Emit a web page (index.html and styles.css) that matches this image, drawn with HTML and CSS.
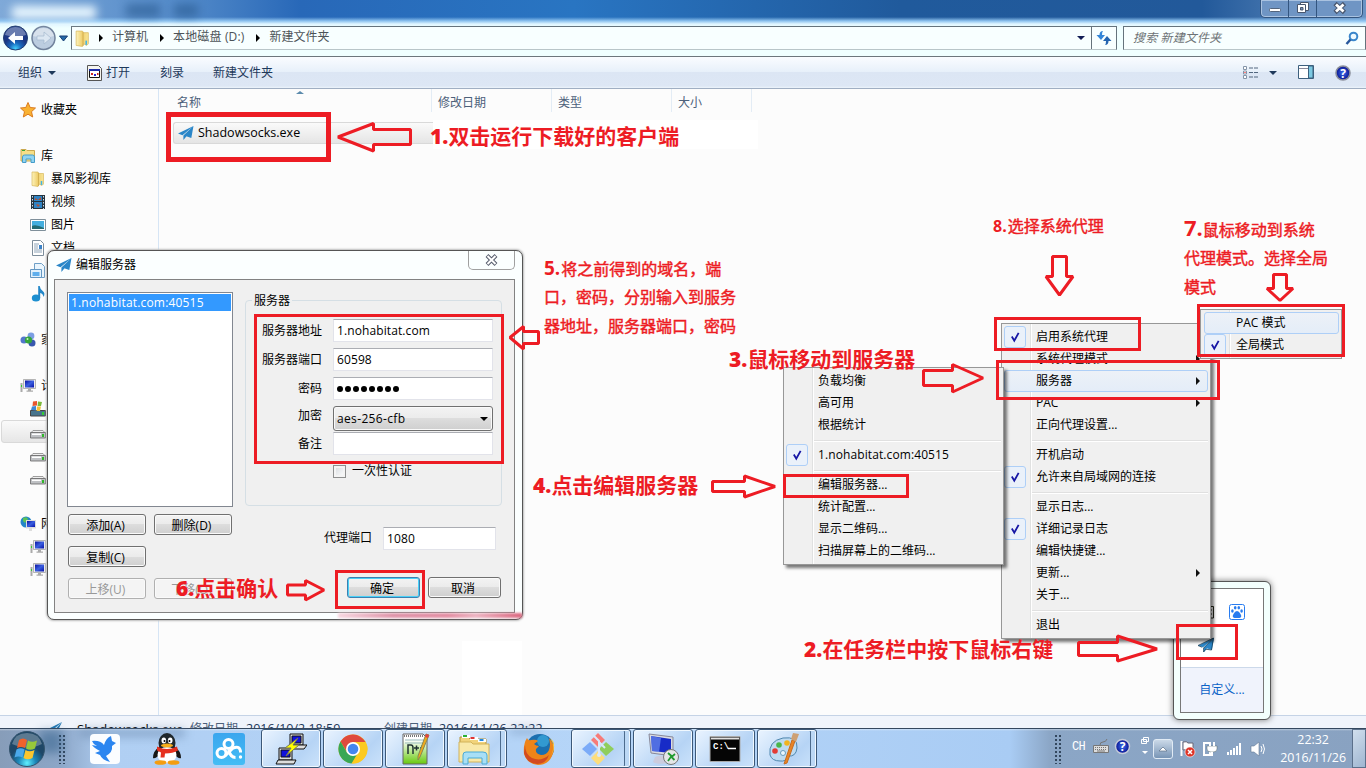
FILE: index.html
```html
<!DOCTYPE html>
<html lang="zh-CN">
<head>
<meta charset="utf-8">
<title>新建文件夹</title>
<link rel="stylesheet" href="styles.css">
</head>
<body>
<svg class="defs" aria-hidden="true">
<defs>
<linearGradient id="gold" x1="0" x2="1"><stop offset="0" stop-color="#fdf3bb"/><stop offset=".5" stop-color="#efcf6e"/><stop offset="1" stop-color="#f8e596"/></linearGradient>
<linearGradient id="scr" x1="0" x2="1" y2="1"><stop offset="0" stop-color="#0a12a0"/><stop offset=".5" stop-color="#3a5fe0"/><stop offset="1" stop-color="#0812a8"/></linearGradient>
<linearGradient id="grn" y2="1" x2="0"><stop offset=".2" stop-color="#fff"/><stop offset="1" stop-color="#67c90d"/></linearGradient>
<radialGradient id="orb" cy=".9"><stop offset="0" stop-color="#5ff0ff"/><stop offset=".5" stop-color="#1c86b8"/><stop offset="1" stop-color="#1e4767"/></radialGradient>
<radialGradient id="back" cy=".95"><stop offset="0" stop-color="#44d2ff"/><stop offset=".5" stop-color="#1968bd"/><stop offset="1" stop-color="#1a3784"/></radialGradient>
<linearGradient id="sky" x2="0" y2="1"><stop offset="0" stop-color="#3aa6ee"/><stop offset="1" stop-color="#43bdf5"/></linearGradient>
<radialGradient id="help"><stop offset="0" stop-color="#3f6ff0"/><stop offset="1" stop-color="#07128e"/></radialGradient>
<symbol id="plane" viewBox="0 0 16 16"><path fill="#2a86c8" d="M15.500 1 0 8.500l4.500 1.800zM15.500 1 5.400 10.600v4.400l2.300-2.800zM15.500 1 7.500 11l5.800 2z"/></symbol>
<symbol id="folder" viewBox="0 0 16 16"><path fill="url(#gold)" stroke="#d9b95f" stroke-width=".7" d="M2 1h6l1 1.500h4.500V13l-1.500 1.500L9 13l-1 2.500-6-1z"/><path d="M8.500 2v13" stroke="#cda748" stroke-width=".8"/><path d="M11.500 10v4" stroke="#43b4e5" stroke-width="1.500"/></symbol>
<symbol id="lib" viewBox="0 0 16 16"><path fill="#f6df88" stroke="#caa950" d="M1 1.500h5l1 1h7.500V13H1z"/><path d="M2 2.500h3" stroke="#3aa53a"/><path fill="#8fd3f2" stroke="#459dca" d="M2.500 14.500V9q0-2 2-2h8q2 0 2 2v5.500h-3.500v-3.500H6v3.500z"/></symbol>
<symbol id="pc" viewBox="0 0 16 16"><path fill="#eee" stroke="#999" stroke-width=".7" d="M3.500 1.500h12v9h-12z"/><path fill="url(#scr)" d="M5 2.500h9v7H5z"/><path fill="#aaa" d="M8 11h3v1.500h2v1.300H6.500v-1.300H8zM.5 5h2v9h-2z"/><path d="M1 7h1v2H1z" fill="#3c3"/></symbol>
<symbol id="disk" viewBox="0 0 16 16"><path fill="#eee" stroke="#888" stroke-width=".8" d="M3 6.500h10l2 2.300H1z"/><path fill="#bfc1c4" stroke="#666" stroke-width=".8" d="M.5 8.500h15V14H.5z"/><path fill="#fff" d="M2 9.500h9v1.500H2z"/><path fill="#30b82a" d="M12 10h2v3h-2z"/></symbol>
<symbol id="check" viewBox="0 0 22 22"><path d="m7.500 10.500 2.700 4.500L15 6.500" fill="none" stroke="#1717a5" stroke-width="2"/></symbol>
</defs>
</svg>

<main class="explorer">
  <header class="titlebar">
    <div class="caption">
      <i class="smudge s1"></i><i class="smudge s2"></i><i class="smudge s3"></i>
      <div class="winbtns">
        <span><svg width="14" height="16"><rect x="1.500" y="8.500" width="11" height="3" rx="1" fill="#fff" stroke="#53647c"/></svg></span>
        <span><svg width="14" height="16"><path d="M4.500 2.500h8v8h-8z" fill="#fff" stroke="#48566e"/><path d="M1.500 4.500h8v8h-8z" fill="#fff" stroke="#48566e"/><path d="M4.500 7.500h2.500v2.500H4.500z" fill="#7991b4" stroke="#48566e"/></svg></span>
        <span class="x"><svg width="14" height="16"><path d="m2 3.500 9.500 9M11.500 3.500l-9.500 9" stroke="#48566e" stroke-width="4.600"/><path d="m3 4.500 7.500 7M10.500 4.500l-7.500 7" stroke="#fff" stroke-width="2.800"/></svg></span>
      </div>
    </div>
    <div class="addressrow">
      <svg class="navbtns" width="71" height="28" viewBox="0 0 71 28">
        <circle cx="15.500" cy="14" r="12" fill="url(#back)" stroke="#203b70"/><path d="M5 11q2-8 10.500-8T26 11q-10 3-21 0" fill="#fff" opacity=".35"/><path d="M8 14l7-6v4h8v4h-8v4z" fill="#fff"/>
        <circle cx="43.500" cy="14" r="11.500" fill="#bccde0" stroke="#71829c" stroke-width="1.500"/><path d="M33 12q2-8 10.500-8T54 12q-10 3-21 0" fill="#fff" opacity=".4"/><path d="m51 14-7-6v4h-7v4h7v4z" fill="#dce7f2" stroke="#a5b9cf" stroke-width=".7"/>
        <path d="M59.500 12h8l-4 5z" fill="#246aa8" stroke="#183f75"/>
      </svg>
      <div class="address">
        <svg class="fico" width="17" height="17"><use href="#folder"/></svg>
        <i class="crumb-arrow"></i><span>计算机</span><i class="crumb-arrow"></i><span class="drive">本地磁盘 (D:)</span><i class="crumb-arrow"></i><span>新建文件夹</span>
        <i class="drop"></i>
        <b class="refresh"><svg width="16" height="16"><path d="M7 1Q3.500 1 3.500 5H.5L5 10l4-5H6q0-3 1-4" fill="#3385d8"/><path d="M9 15q3.500 0 3.500-4h3L11 6l-4 5h3q0 3-1 4" fill="#2464b0"/></svg></b>
      </div>
      <div class="search"><span>搜索 新建文件夹</span><svg width="15" height="15"><circle cx="8.500" cy="5.500" r="3.800" fill="#eefaff" stroke="#3a86cb" stroke-width="2"/><path d="m5.500 8.500-4 4.500" stroke="#27589c" stroke-width="2.500"/></svg></div>
    </div>
  </header>
  <nav class="toolbar">
    <span class="t1">组织<i class="caret"></i></span>
    <span class="t2"><svg width="15" height="16"><path d="M.5.5h11l3 3v12H.5z" fill="#f5f5f0" stroke="#555"/><path d="M2.500 4.500h10v8h-10z" fill="#fff" stroke="#111"/><path d="M2 4h11v2H2z" fill="#1b2aa8"/><path d="M4 8h2v2H4z" fill="#c22"/><path d="M7 9h2v2H7z" fill="#22c"/><path d="M10 8h1.500v2H10z" fill="#c22"/></svg>打开</span>
    <span class="t3">刻录</span>
    <span class="t4">新建文件夹</span>
    <span class="views"><svg width="16" height="14"><path d="M.5.500h3v3h-3zm0 4.500h3v3h-3zm0 4.500h3v3h-3z" fill="#fff" stroke="#8494a8"/><path d="M6 2h4m1 0h4M6 6.500h4m1 0h4M6 11h4m1 0h4" stroke="#52677f"/><path d="M1.500 6h1v1h-1z" fill="red"/></svg><i class="caret"></i></span>
    <svg class="pane" width="17" height="15"><path d="M.5.500h15v13H.5z" fill="#fff" stroke="#3d607e"/><path d="M10.500 1h4.500v12h-4.500z" fill="#7cc9e2" stroke="#3d607e"/><path d="M1 3.500h9" stroke="#889"/></svg>
    <svg class="helpico" width="16" height="16"><circle cx="8" cy="8" r="7" fill="url(#help)" stroke="#8b8f9b" stroke-width="1.600"/><text x="8" y="12.500" text-anchor="middle" class="q">?</text></svg>
  </nav>
  <section class="content">
    <aside class="side">
      <div><svg viewBox="0 0 16 16"><path d="m8 .5 2.200 5 5.300.5-4 3.700 1.200 5.300L8 12.200 3.300 15l1.200-5.300L.5 6l5.300-.5z" fill="#f9b233" stroke="#db7a1e"/></svg>收藏夹</div>
      <p></p>
      <div><svg><use href="#lib"/></svg>库</div>
      <div class="sub"><svg><use href="#folder"/></svg>暴风影视库</div>
      <div class="sub"><svg viewBox="0 0 16 16"><path fill="#26343e" d="M1 1h14v14H1z"/><path d="M2.500 2v13m11-13v13" stroke="#cde" stroke-dasharray="1.500"/><path fill="#2f83c4" d="M4 2h8v5H4zm0 6h8v6H4z"/><path d="m5 4 3 2 3-3v3H5zm1 6 4 1-2 2z" fill="#b9502f"/></svg>视频</div>
      <div class="sub"><svg viewBox="0 0 16 16"><path d="M.5 2.500h15v11H.5z" fill="#fff" stroke="#7f8f9a"/><path fill="#45aede" d="M2 4h12v8H2z"/><path d="M2 9q4-2 12 2v1H2z" fill="#246b73"/></svg>图片</div>
      <div class="sub"><svg viewBox="0 0 16 16"><path d="M2.500.5h8l3 3v12h-11z" fill="#fff" stroke="#7d8d9b"/><path d="M4 4h5M4 6h4M4 8h4M4 10h8M4 12h8" stroke="#8fa4b8"/><path fill="#3c82c7" d="M9 5h3v4H9z"/></svg>文档</div>
      <div class="sub"><svg viewBox="0 0 16 16"><path d="M4.500.5h7l3 3v11h-10z" fill="#eaf5fd" stroke="#6f9fc6"/><path d="M.5 6.500h11v8H.5z" fill="#e2f1fc" stroke="#6497c2"/><path fill="#5eaeed" d="M2.500 9h7v4h-7z"/></svg></div>
      <div class="sub"><svg viewBox="0 0 16 16"><ellipse cx="6" cy="12" rx="4.200" ry="3.500" fill="#1d8fd0"/><path d="M8.200 12V0h1.500q.5 3.500 3 5 3 2 .8 6-.5-3.500-3.300-4V12z" fill="#2387c8"/></svg></div>
      <p></p>
      <div><svg viewBox="0 0 16 16"><circle cx="4" cy="8" r="3.500" fill="#5377cc"/><circle cx="11" cy="4" r="3.400" fill="#7c9ee3"/><circle cx="12" cy="11" r="3.500" fill="#3858ae"/><circle cx="8.500" cy="8" r="3.600" fill="#35a63b"/><circle cx="7.500" cy="7" r="1" fill="#c8f5bd"/></svg>家庭组</div>
      <p></p>
      <div><svg><use href="#pc"/></svg>计算机</div>
      <div class="sub"><svg viewBox="0 0 16 16"><path d="M.5 9.500h15V15H.5z" fill="#47748c" stroke="#444"/><path fill="#32cc35" d="M12 11h2v3h-2z"/><path fill="#e8562d" d="M3 .5 7 0v4.500L2.500 5z"/><path fill="#7bb93c" d="m8 .5 4 .5-1 4H7.500z"/><path fill="#3f87d3" d="m2 5.500 4-.5v4.500L1 9z"/><path fill="#f5c034" d="M7 5.500h4l-1 4.500H6.500z"/></svg></div>
      <div class="sub sel"><svg><use href="#disk"/></svg></div>
      <div class="sub"><svg><use href="#disk"/></svg></div>
      <div class="sub"><svg><use href="#disk"/></svg></div>
      <p></p>
      <div><svg viewBox="0 0 16 16"><circle cx="6" cy="6" r="5.500" fill="#2486c8"/><path d="M3 2q4-2 5 1L5 7 3 5zm3 6 3-1v4H6z" fill="#5cc356"/><path fill="#ddd" d="M6 4h10v8.500h-4V15H9v-2.500H6z"/><path fill="url(#scr)" d="M7 5h8v6H7z"/></svg>网络</div>
      <div class="sub"><svg><use href="#pc"/></svg></div>
      <div class="sub"><svg><use href="#pc"/></svg></div>
    </aside>
    <div class="files">
      <div class="cols"><span class="c1">名称<i class="sort"></i></span><span class="c2">修改日期</span><span class="c3">类型</span><span class="c4">大小</span></div>
      <div class="filerow"><div class="file"><svg width="16" height="16"><use href="#plane"/></svg>Shadowsocks.exe</div><div class="patch"></div></div>
      <div class="patch2"></div>
    </div>
  </section>
  <footer class="details"><svg width="52" height="44"><path d="M42 6 0 27l12 5zM42 6 16 34l10 5z" fill="#2379b4"/></svg><span class="d1">Shadowsocks.exe</span><span class="d2">修改日期</span><span class="d3">2016/10/2 18:59</span><span class="d4">创建日期</span><span class="d5">2016/11/26 22:22</span></footer>
</main>

<footer class="taskbar">
  <i class="shade a"></i><i class="shade b"></i><i class="shade c"></i>
  <svg class="start" width="38" height="38" viewBox="0 0 38 38"><circle cx="19" cy="19" r="17.500" fill="url(#orb)" stroke="#33536c"/><path d="M4 14Q7 3 19 3t15 11q-14 7-30 0" fill="#fff" opacity=".28"/><path d="M11 10q4-3 8 0l-2 8q-4-2-8 0z" fill="#f0622c"/><path d="M20 10.500q4 2.500 9 0l-2 8q-5 2.500-9 0z" fill="#97c83a"/><path d="M8.500 19.500q4-2.500 8 0l-2 8q-4-2-8 0z" fill="#4ba9ea"/><path d="M17.500 20q4 2.500 9 0l-2 8q-5 2.500-9 0z" fill="#fcc62e"/></svg>
  <i class="dots"></i>
  <div class="tasks">
    <span><svg viewBox="0 0 32 32"><rect x="1" y="1" width="30" height="30" rx="4" fill="#fbfdff"/><path d="M3 8q8-1 12 4Q17 5 22 3l1 5 4 2-4 3q1 6-6 10l4 6q-8-2-10-7l-5-2 5-2q-6-3-8-6l5 1Q4 11 3 8" fill="#2c86f0"/></svg></span>
    <span><svg viewBox="0 0 32 32"><path d="M8 14q-6 4-6 11 2 1 5-2h18q3 3 5 2 0-7-6-11z" fill="#171717"/><ellipse cx="16" cy="10" rx="8.500" ry="10" fill="#20272b"/><ellipse cx="16" cy="22" rx="9.500" ry="8" fill="#fff"/><ellipse cx="12.800" cy="7.500" rx="2.300" ry="3" fill="#fff"/><ellipse cx="19.200" cy="7.500" rx="2.300" ry="3" fill="#fff"/><circle cx="13.500" cy="8" r="1"/><circle cx="18.500" cy="8" r="1"/><ellipse cx="16" cy="12.500" rx="6" ry="1.900" fill="#f8ae1a"/><path d="M6 13.500q10 5 20 0l1 4q-5 3-13 3l-.5 4h-4l.5-5-4-2z" fill="#e5301f"/><ellipse cx="9.500" cy="29.500" rx="6" ry="2.300" fill="#f49d10"/><ellipse cx="22.500" cy="29.500" rx="6" ry="2.300" fill="#f49d10"/></svg></span>
    <span><svg viewBox="0 0 32 32"><rect width="32" height="32" rx="3" fill="url(#sky)"/><g fill="none" stroke="#fff" stroke-width="3"><circle cx="15.500" cy="11" r="4.500"/><circle cx="8.500" cy="20" r="4.500"/><path d="m12 23 7.500-7.500Q26 12 27.500 18v1.500"/><path d="M15.500 17q2 7.500 7 7.500"/></g><circle cx="27.500" cy="24" r="1.700" fill="#fff"/></svg></span>
    <span class="on"><svg viewBox="0 0 32 32"><g stroke="#111" fill="#ddd"><path d="M15 1h13v11H15z"/><path fill="#1111dc" d="M17 3h9v7h-9z"/><path d="m15 12-3 4h17l3-4z"/><path d="M4 15h13v12H4z"/><path fill="#1111dc" d="M6 17h9v7H6z"/><path d="m3 27-2 4h18l2-4z"/></g><path d="M23 5 10 15h6l-5 8 13-11h-6z" fill="#ff0" stroke="#775"/></svg></span>
    <span class="on"><svg viewBox="0 0 32 32"><circle cx="16" cy="16" r="14.500" fill="#fbc51d"/><path d="M3.500 8.500A14.500 14.500 0 0 1 28.500 9H16l-6 10z" fill="#df4a3d"/><path d="M3.500 8.500a14.500 14.500 0 0 0 11 22L21 20l-11-.5z" fill="#38a756"/><path d="M21 20 15 30.500A14.500 14.500 0 0 0 28.500 9H16z" fill="#fcca20"/><circle cx="16" cy="16" r="7" fill="#fff"/><circle cx="16" cy="16" r="5.300" fill="#4486ef"/></svg></span>
    <span class="on"><svg viewBox="0 0 32 32"><path d="M4 1h20l4 4v26H4z" fill="url(#grn)" stroke="#666"/><path d="M5 3h20" stroke="#777" stroke-width="2" stroke-dasharray="1"/><path d="M6 7h19M6 10h18" stroke="#9bb"/><path d="M9 21v-9h3q2 0 2 3v6m1-6h5m-2.500-2.500v5M21 15h4m-2-2.500v5" fill="none" stroke="#233" stroke-width="1.500"/><path d="M30 2 21 24l-2 3v-4L27 1z" fill="#efa91b" stroke="#885"/><path d="m30 2-1 3-3-1 1-3z" fill="#e34242"/></svg></span>
    <span class="on stack"><svg viewBox="0 0 32 32"><path d="M2 4h8l2 2h16v22H2z" fill="#f1d37a" stroke="#b4923b"/><path d="M4 3.500h8m0 2h8m0 2h8" stroke="#fff" stroke-width="3"/><path d="M5 3h4" stroke="#2ab136" stroke-width="2"/><path d="M12.500 5h4" stroke="#d33" stroke-width="2"/><path d="M21.500 7h4" stroke="#28d" stroke-width="2"/><path d="M1 9h12l2 2h16v18H1z" fill="#f9e9a9" stroke="#d2b35b"/><path d="M5 31v-9q0-3 3-3h17q4 0 4 3v9h-5v-6H10v6z" fill="#a8dff6" stroke="#4baad6"/></svg></span>
    <span><svg viewBox="0 0 32 32"><circle cx="17" cy="15" r="14" fill="#1b6faf"/><circle cx="20" cy="8" r="6" fill="#43b6e7" opacity=".6"/><path d="M4 5q1 3 4 2 5-1 7 1l-4 3q2 2 5 2l-3 3q-1 5 5 6 6 0 8-5 2-5 0-12 8 9 3 18-4 9-14 9Q4 31 1 21 0 11 4 5" fill="#ee8419"/><path d="M2 12q0 9 7 13 9 4 17-3-3 9-12 9Q3 30 1 20z" fill="#d24a20"/><path d="M27 5q6 8 1 18 5-8 2-15z" fill="#fcc53c"/></svg></span>
    <span class="on stack"><svg viewBox="0 0 32 32"><path d="m16 0 7 7-7 7-7-7z" fill="#f77b78"/><path d="m8 9 7 7-7 7-8-7z" fill="#7babf8"/><path d="m24 9 8 7-8 7-7-7z" fill="#8fce5c"/><path d="m16 18 7 7-7 7-7-7z" fill="#fcdd7c"/><path d="M11 2 17 8v14M17 9l6 6" stroke="#d9e8fa" stroke-width="2" fill="none"/><circle cx="17" cy="22" r="2" fill="#d9e8fa"/></svg></span>
    <span class="on"><svg viewBox="0 0 32 32"><path d="m2 1 24 3v19L4 20z" fill="#d8dbe2" stroke="#889"/><path d="m4 3 20 3v14L5 18z" fill="#172bc7"/><path d="m4 3 10 2-2 14-7-1z" fill="#769bf4" opacity=".6"/><path d="M8 24q10-4 14 6-12 2-16-1z" fill="#ccd"/><circle cx="24" cy="24" r="7.500" fill="#e4e6e8" stroke="#777"/><path d="m21 20 3.500 3-3.500 5m7-7-3.500 3 3 3" stroke="#1f9b2d" stroke-width="1.800" fill="none"/></svg></span>
    <span class="on"><svg viewBox="0 0 32 32"><path d="M1 3.500h30v25H1z" fill="#050505" stroke="#aaa"/><path d="M2 4.500h28v2H2z" fill="#e1e1e1"/><text x="4" y="16" class="cmd">C:\</text><path d="M19 15.500h8" stroke="#fff" stroke-width="1.500"/></svg></span>
    <span class="on stack"><svg viewBox="0 0 32 32"><path d="M2 22Q0 8 15 5q15-2 14 10-1 9-9 8-2 6-8 5Q4 28 2 22" fill="#bedbf1" stroke="#4e86ae"/><circle cx="7" cy="18" r="2.800" fill="#e33b33"/><circle cx="11" cy="12" r="2.800" fill="#49b64b"/><circle cx="19" cy="10" r="2.800" fill="#f1b420"/><circle cx="15" cy="20" r="2.500" fill="#eaf7ff" stroke="#6a9cbd"/><path d="m27 8-8 22-3 1 8-24z" fill="#e98324" stroke="#c56c21"/><path d="m23 6 2-6 6 1-3 8z" fill="#cda074"/></svg></span>
  </div>
  <div class="tray">
    <i class="dots"></i><span class="ch">CH</span>
    <svg class="kb" width="16" height="16"><path d="M.5 7.500h15v7H.5z" fill="#ddd" stroke="#777"/><path d="M2 9.500h12M2 11.500h12" stroke="#777" stroke-dasharray="1"/><path d="M4 13h8M7 7q0-3 3-3t4-3" stroke="#777" fill="none"/></svg>
    <svg class="th" width="17" height="17"><circle cx="8.500" cy="8.500" r="7" fill="url(#help)" stroke="#c5cbda" stroke-width="1.500"/><text x="8.500" y="13" text-anchor="middle" class="q">?</text></svg>
    <svg class="lang" width="9" height="20"><path d="M2.500 1.500h5v4h-5zM.5 3.500h5v4h-5z" fill="#8ca6c6" stroke="#fff"/><path d="M1 15h6l-3 3z" fill="#fff"/></svg>
    <span class="up"><svg width="10" height="8"><path d="m1 6 4-4 4 4z" fill="#fff" stroke="#5b7088" stroke-width=".7"/></svg></span>
    <svg class="flag" width="17" height="18"><path d="M2.500 1v15" stroke="#fff" stroke-width="2"/><path d="M4 2q4-1 5 1h5v8H9q-2-2-5-1z" fill="#fff" stroke="#667"/><circle cx="11" cy="12" r="5" fill="#de3427" stroke="#fff" stroke-width=".6"/><path d="m9 10 4 4m0-4-4 4" stroke="#fff" stroke-width="1.500"/></svg>
    <svg class="plug" width="17" height="18"><path d="M8 3H2v12h6v-3" fill="none" stroke="#fff" stroke-width="2"/><path d="M5 6h10v3q0 3-4 3H9q-4 0-4-3z" fill="#fff" stroke="#566" stroke-width=".5"/><path d="M8 2v4m4-4v4M10 12v4" fill="none" stroke="#fff" stroke-width="2"/></svg>
    <svg class="signal" width="18" height="14"><path d="M2 13v-3m3 3V8m3 5V6m3 7V4m3 9V1" stroke="#fff" stroke-width="2"/></svg>
    <svg class="speaker" width="17" height="16"><path d="M1 5h3l5-4v14l-5-4H1z" fill="#fff" stroke="#637995" stroke-width=".6"/><path d="M11 5q2 3 0 6m2-8q3 5 0 10" stroke="#fff" fill="none"/></svg>
    <div class="clock"><span>22:32</span><span>2016/11/26</span></div>
    <i class="show"></i>
  </div>
</footer>

<section class="flyout"><div class="flyin"><div class="icons"><svg class="hid" width="4" height="13"><path d="M0 .5h3.500V12H0M0 4h2M0 8h2" fill="none" stroke="#26281c"/></svg><svg class="paw" width="16" height="16"><rect x=".5" y=".5" width="15" height="15" rx="2" fill="#fff" stroke="#287cf0"/><g fill="#287cf0"><ellipse cx="3.400" cy="7" rx="1.300" ry="1.800"/><ellipse cx="6.200" cy="3.800" rx="1.300" ry="1.800"/><ellipse cx="9.800" cy="3.800" rx="1.300" ry="1.800"/><ellipse cx="12.600" cy="7" rx="1.300" ry="1.800"/><path d="M8 7q2 0 3.500 3 2 3-1 4H5.500q-3-1-1-4Q6 7 8 7"/></g></svg><svg class="tp" width="17" height="16"><use href="#plane"/><path d="M15.500 1 0 8.500l4.200 1.800M15.500 1 5.600 11v4l2.300-2.800 5.600.8z" fill="none" stroke="#123d5b" stroke-width=".8"/></svg></div><div class="custom">自定义...</div></div></section>

<section class="menu main">
  <div class="on chk"><svg><use href="#check"/></svg>启用系统代理</div>
  <div class="more">系统代理模式</div>
  <div class="more hot">服务器</div>
  <div class="more">PAC</div>
  <div>正向代理设置...</div><hr>
  <div>开机启动</div>
  <div class="chk"><svg><use href="#check"/></svg>允许来自局域网的连接</div><hr>
  <div>显示日志...</div>
  <div class="chk"><svg><use href="#check"/></svg>详细记录日志</div>
  <div>编辑快捷键...</div>
  <div class="more">更新...</div>
  <div>关于...</div><hr>
  <div>退出</div>
</section>
<section class="menu server">
  <div>负载均衡</div><div>高可用</div><div>根据统计</div><hr>
  <div class="chk"><svg><use href="#check"/></svg><span class="host">1.nohabitat.com:40515</span></div><hr>
  <div>编辑服务器...</div><div>统计配置...</div><div>显示二维码...</div><div>扫描屏幕上的二维码...</div>
</section>
<section class="menu mode">
  <div class="hot">PAC 模式</div>
  <div class="chk"><svg><use href="#check"/></svg>全局模式</div>
</section>

<section class="dialog">
  <header><svg width="16" height="16"><use href="#plane"/></svg><span>编辑服务器</span><b class="close"><svg width="13" height="12"><path d="m2 1.500 9 9M11 1.500l-9 9" stroke="#555c6c" stroke-width="4"/><path d="m2.500 2 8 8m0-8-8 8" stroke="#fff" stroke-width="2"/></svg></b></header>
  <div class="client">
    <div class="left">
      <div class="list"><div class="host">1.nohabitat.com:40515</div></div>
      <div class="btns"><span class="btn">添加(A)</span><span class="btn">删除(D)</span><span class="btn">复制(C)</span><i></i><span class="btn off">上移(U)</span><span class="btn off">下移(O)</span></div>
    </div>
    <div class="right">
      <fieldset><legend>服务器</legend>
        <div class="fields">
          <label>服务器地址</label><span class="inp">1.nohabitat.com</span>
          <label>服务器端口</label><span class="inp">60598</span>
          <label>密码</label><span class="inp pwd"><svg width="68" height="8"><path d="M4 4h60" stroke="#000" stroke-width="6" stroke-linecap="round" stroke-dasharray="0 8"/></svg></span>
          <label class="enc">加密</label><span class="btn sel">aes-256-cfb<i></i></span>
          <label class="rem">备注</label><span class="inp rem"></span>
        </div>
        <div class="once"><i></i>一次性认证</div>
      </fieldset>
      <div class="proxy"><label>代理端口</label><span class="inp">1080</span></div>
      <div class="ok"><span class="btn def">确定</span><span class="btn">取消</span></div>
    </div>
  </div>
  <i class="bleed"></i>
</section>

<svg class="marks" width="1366" height="768" viewBox="0 0 1366 768">
  <rect x="168.500" y="114.500" width="160" height="45" stroke-width="5"/>
  <rect x="255.500" y="315.500" width="247" height="147"/>
  <rect x="336.500" y="571.500" width="87" height="36"/>
  <rect x="784.500" y="475.500" width="123" height="21"/>
  <rect x="995.500" y="318.500" width="144" height="31"/>
  <rect x="997.500" y="361.500" width="221" height="37"/>
  <rect x="1198.500" y="305.500" width="145" height="50"/>
  <rect x="1177.500" y="625.500" width="59" height="33"/>
  <g class="arrows">
  <path d="M338 137 373.500 123.500V129.500H410.500V144.500H373.500V151z"/>
  <path d="M510 337.500 523.500 326.500V331.500H538.500V343.500H523.500V349z"/>
  <path d="M983 378 952.500 364.500V370.500H923.500V385.500H952.500V392z"/>
  <path d="M775 486.500 744.500 476V481.500H712.500V491.500H744.500V497z"/>
  <path d="M324 590 305.500 580.500V585H287.500V595H305.500V600z"/>
  <path d="M1059.500 295 1073 276.500H1066.500V256.500H1052.500V276.500H1046z"/>
  <path d="M1280 300.500 1293 288.500H1286.500V274.500H1273.500V288.500H1267z"/>
  <path d="M1157 649 1117.500 636V642.500H1078.500V655.500H1117.500V661z"/>
  </g>
</svg>
<div class="note n1"><b>1.</b>双击运行下载好的客户端</div>
<div class="note n2"><b>2.</b>在任务栏中按下鼠标右键</div>
<div class="note n3"><b>3.</b>鼠标移动到服务器</div>
<div class="note n4"><b>4.</b>点击编辑服务器</div>
<div class="note small n5"><p><b>5.</b>将之前得到的域名，端</p><p>口，密码，分别输入到服务</p><p>器地址，服务器端口，密码</p></div>
<div class="note n6"><b>6.</b>点击确认</div>
<div class="note small n7"><p><b>7.</b>鼠标移动到系统</p><p>代理模式。选择全局</p><p>模式</p></div>
<div class="note small n8"><b>8.</b>选择系统代理</div>
</body>
</html>
```
FILE: styles.css
```css
*{box-sizing:border-box}
body{margin:0;width:1366px;height:768px;overflow:hidden;position:relative;background:#fcfcfc;font:12px/22px "Open Sans","Noto Sans CJK SC",sans-serif;color:#000}
i,em{font-style:normal}
p{margin:0}
svg{display:block;flex:none}
.defs{position:absolute;width:0;height:0}

.explorer{height:728px;display:flex;flex-direction:column;overflow:hidden}
.titlebar{height:57px;flex:none;display:flex;flex-direction:column;border-bottom:1px solid #6d767c;background:linear-gradient(#fff0 0 17px,#8fc4f0 21px,#dff5ff 24px,#f0ffff 28px 100%),linear-gradient(90deg,#7fa9d8,#5088c8 14%,#2868b8 22%,#2975c2 42%,#205a9c 66%,#22599a 88%,#6a94c5)}
.caption{height:24px;position:relative;display:flex;justify-content:flex-end;padding-right:3px}
.smudge{position:absolute;filter:blur(5px)}
.s1{left:12px;top:6px;width:84px;height:13px;background:#e9f7ff}
.s2{left:126px;top:4px;width:34px;height:13px;background:#28598f;opacity:.6}
.s3{left:174px;top:4px;width:24px;height:13px;background:#28598f;opacity:.6}
.winbtns{display:flex;height:18px;width:103px;border:1px solid #33557f;border-top:0;border-radius:0 0 5px 5px;background:#6f95c4;box-shadow:inset 0 0 0 1px #a9c2e0}
.winbtns span{width:28px;display:flex;justify-content:center;border-right:1px solid #33557f}
.winbtns span.x{flex:1;border:0}
.addressrow{display:flex;height:28px;align-items:center}
.address{height:24px;width:1046px;display:flex;align-items:center;border:1px solid #65737c;border-bottom-color:#b9c6c9;background:#f8ffff;color:#4c5358;padding-left:1px}
.fico{margin:0 8px 0 1px}
.crumb-arrow{border:4px solid transparent;border-left:4px solid #000;border-right:0;margin:0 9px 0 0}
.address span{margin-right:12px;line-height:20px;padding-bottom:2px}
.address .drive{letter-spacing:.15px}
.drop{margin-left:auto;border:4px solid transparent;border-top:4px solid #111c55;border-bottom:0;margin-right:6px}
.refresh{height:22px;width:25px;border-left:1px solid #65737c;display:flex;align-items:center;justify-content:center}
.search{height:24px;width:243px;margin-left:6px;border:1px solid #65737c;border-bottom-color:#b9c6c9;background:#f8ffff;display:flex;align-items:center;justify-content:space-between;padding:0 5px 0 9px;color:#6d7376;font-style:italic;letter-spacing:.15px}
.toolbar{height:32px;flex:none;display:flex;align-items:center;border-bottom:1px solid #a0afc3;background:linear-gradient(#fafcff,#e7f0fa 15px,#dce6f4 15px,#dde7f5 29px,#edf4fb);color:#1e395b;padding-left:18px}
.caret{border:4px solid transparent;border-top:4px solid #1e395b;border-bottom:0;margin-left:6px}
.t1,.t2,.views{display:flex;align-items:center}
.t1{width:69px}.t2{width:73px}.t2 svg{margin-right:4px}.t3{width:53px}.t4{flex:1}
.views .caret{margin-left:10px}.pane{margin:0 20px 0 21px}.helpico{margin-right:15px}
.q{font:bold 12px "Open Sans",sans-serif;fill:#fff}
.content{flex:1;display:flex;min-height:0}
.side{width:159px;border-right:1px solid #d6e5f5;padding-top:9px}
.side>*{height:23px}
.side div{display:flex;align-items:center;padding-left:20px;white-space:nowrap}
.side svg{width:16px;height:16px;margin-right:5px}
.side .sub{padding-left:30px}
.side .sel{border:1px solid #d9d9d9;border-radius:3px;background:linear-gradient(#fafafa,#e6e6e6);margin-left:1px;padding-left:28px}
.files{flex:1}
.cols{display:flex;height:27px;color:#4c607a}
.cols span{height:23px;line-height:28px;padding-left:6px;border-right:1px solid #e3ecf5}
.cols .c1{width:273px;padding-left:18px;display:flex}
.c2,.c3{width:120px}.c4{width:80px}
.sort{border:4px solid transparent;border-bottom:3px solid #5b8aac;border-top:0;margin:2px 0 0 95px;height:0}
.filerow{display:flex;padding-left:14px;height:33px}
.file{margin-top:6px;height:22px;width:260px;border:1px solid #d9d9d9;border-right:0;border-radius:3px 0 0 3px;background:linear-gradient(#fafafa,#e5e5e5);display:flex;align-items:center;padding-left:4px;gap:4px;font-size:12.500px}
.patch{height:29px;width:325px;margin-top:4px;background:#fff}
.patch2{width:60px;height:74px;margin:492px 0 0 303px;background:#fff}
.details{height:13px;flex:none;border-top:1px solid #c5d3e6;background:#f0f4fb;display:flex;padding-left:20px;color:#4c607a;overflow:hidden;white-space:nowrap}
.details span{line-height:26px}
.d1{width:118px;color:#000;font-size:13px;padding-left:5px}.d2{width:56px}.d3{width:138px;color:#1e395b;font-size:12.500px}.d4{width:55px}.d5{color:#1e395b;font-size:12.500px;letter-spacing:.15px}

.taskbar{height:40px;position:relative;display:flex;align-items:center;border-top:1px solid #34475e;background:linear-gradient(#ffffff66,#fff0 2px),linear-gradient(90deg,#879db9 0,#8ca6c7 60px,#b0cff3 110px,#b5d5f8 600px,#a9ccf4 1010px,#8ba6c6 1050px,#89a2c1)}
.shade{position:absolute;filter:blur(5px)}
.a{left:40px;top:2px;width:22px;height:22px;background:#2c5c88;opacity:.5}
.b{left:80px;top:0;width:105px;height:8px;background:#5f7ca0;opacity:.5}
.c{left:510px;top:0;width:30px;height:4px;background:#4a688e;opacity:.5}
.start,.tasks{position:relative}
.start{margin-left:8px}
.dots{width:9px;height:30px;background:radial-gradient(circle,#34485f 0 .8px,#fff0 1.100px) 0 0/4px 4px}
.start+.dots{margin-left:12px}
.tasks{display:flex;gap:2px;margin-left:8px}
.tasks span{width:60px;height:39px;display:flex;align-items:center;justify-content:center;border:1px solid transparent}
.tasks svg{width:32px;height:32px}
.tasks .on{border:1px solid #3c5878;border-radius:3px;background:linear-gradient(135deg,#eaf4ff,#b6d4f5 65%,#cce3fb);box-shadow:inset 0 0 0 1px #f0f8ff}
.tasks .stack{padding-right:7px;box-shadow:inset 0 0 0 1px #f0f8ff,inset -5px 0 #bcd8f5,inset -6px 0 #4c6b8d}
.tray{margin-left:auto;display:flex;align-items:center;height:39px;color:#fff;width:312px}
.ch{width:22px;padding-left:9px;margin-top:-3px;font:12px "Liberation Mono",monospace;letter-spacing:-.7px}
.kb{margin-left:8px;margin-top:-5px}.th{margin-left:5px;margin-top:-5px}.lang{margin-left:10px;margin-top:-6px}
.up{width:20px;height:20px;border:1px solid #e1ebf5;border-radius:3px;background:linear-gradient(#cbd9e8,#7895b6);display:flex;align-items:center;justify-content:center;margin-left:3px}
.flag{margin-left:6px}.plug{margin-left:6px}.signal{margin-left:7px}.speaker{margin-left:6px}
.clock{display:flex;flex-direction:column;align-items:center;line-height:18px;margin-left:auto;margin-right:6px;font-size:12.400px}
.show{width:14px;height:39px;border:1px solid #5b708b;background:linear-gradient(135deg,#d0deed,#9fb6d1)}
.cmd{font:bold 9px "Liberation Mono",monospace;fill:#fff}

.flyout{position:absolute;left:1173px;top:581px;width:98px;height:139px;border:1px solid #555;border-radius:6px;background:#f3fffd;padding:6px;box-shadow:0 0 6px #777}
.flyin{height:125px;border:1px solid #777;display:flex;flex-direction:column;background:#fff}
.icons{flex:1;position:relative}
.hid{position:absolute;left:29px;top:17px}.paw{position:absolute;left:48px;top:15px}.tp{position:absolute;left:17px;top:48px}
.custom{height:45px;line-height:43px;border-top:1px solid #ccd9ea;background:#f0f3fc;color:#0c63c7;text-align:center}

.menu{position:absolute;border:1px solid #979797;padding:2px;background:linear-gradient(90deg,#f0f0f0 28px,#e0e1e1 28px 29px,#fff 29px 30px,#f0f0f0 30px);box-shadow:3px 3px 3px #0008}
.menu div{height:22px;padding-left:32px;position:relative;white-space:nowrap}
.menu hr{height:8px;margin:0 0 0 28px;border:0;background:linear-gradient(#f0f0f0 4px,#e0e0e0 4px 5px,#fff 5px 6px,#f0f0f0 6px)}
.menu svg{position:absolute;left:0;top:0;width:22px;height:22px;border:1px solid #aecff7;border-radius:3px;background:#eaf1fa}
.menu .hot{border:1px solid #aecff7;border-radius:3px;background:linear-gradient(#edf1f7,#e4edf8);line-height:20px;padding-left:31px}
.more:after{content:"";position:absolute;right:8px;top:50%;margin-top:-4px;border:4px solid transparent;border-left:4px solid #111;border-right:0}
.more.hot:after{right:7px}
.host{letter-spacing:.1px}
.main{left:1001px;top:323px;width:210px;height:316px}
.server{left:783px;top:367px;width:221px;height:198px}
.mode{left:1200px;top:309px;width:142px;height:50px;padding-left:3px;box-shadow:none}

.dialog{position:absolute;left:47px;top:250px;width:476px;height:370px;border:1px solid #555;border-radius:7px;background:#fbffff;box-shadow:0 0 2px 1px #bbb;padding:0 6px}
.dialog header{height:28px;display:flex;padding-left:2px}
.dialog header>svg{margin-top:6px;margin-right:4px}
.dialog header span{line-height:28px}
.close{margin-left:auto;margin-right:1px;width:47px;height:19px;border:1px solid #a0a0a0;border-top:0;border-radius:0 0 5px 5px;display:flex;align-items:center;justify-content:center}
.client{height:334px;width:461px;border:1px solid #828282;background:#f0f0f0;display:flex;padding:12px 0 0 12px}
.left{width:166px}
.list{height:215px;border:1px solid #828790;background:#fff;padding:1px}
.list div{height:17px;line-height:17px;background:#39f;color:#fff;padding-left:2px;letter-spacing:.18px}
.btns{display:grid;grid-template-columns:78px 78px;gap:11px 8px;margin:7px 0 0 1px}
.btn{height:21px;border:1px solid #707070;border-radius:3px;background:linear-gradient(#f3f3f3,#ebebeb 50%,#ddd 50%,#cfcfcf);box-shadow:inset 0 0 0 1px #fafafa;text-align:center;line-height:21px;padding-right:3px}
.off{color:#999;border-color:#b0b0b0;background:#f4f4f4}
.right{margin-left:12px;width:257px}
fieldset{margin:0;padding:0;height:214px;border:1px solid #d5dfe5;border-radius:4px;min-width:0}
legend{height:16px;line-height:18px;margin-left:6px;padding:0 2px}
.fields{display:grid;grid-template-columns:76px 160px;column-gap:11px;grid-template-rows:23px 23px 23px 25px 23px;row-gap:6px;padding-top:11px}
.fields label{text-align:right;line-height:24px}
.fields .enc{line-height:20px}
.rem{margin-top:-5px;height:23px}
.inp{height:23px;border:1px solid #e2e3ea;border-top-color:#abadb3;background:#fff;line-height:22px;padding-left:3px;letter-spacing:.1px}
.pwd{padding-top:7px;padding-left:2px}
.btn.sel{height:25px;line-height:24px;text-align:left;padding:0 4px 0 3px;display:flex;justify-content:space-between;align-items:center;letter-spacing:.35px}
.sel i{border:4px solid transparent;border-top:4px solid #000;border-bottom:0}
.once{display:flex;align-items:center;margin:1px 0 0 87px;gap:6px;line-height:20px}
.once i{width:13px;height:13px;border:1px solid #8e8f8f;background:linear-gradient(135deg,#d5d9dd,#fff);box-shadow:inset 0 0 0 2px #f4f4f4}
.proxy{display:flex;gap:11px;margin:20px 0 0 79px;line-height:24px;height:24px}
.proxy .inp{width:113px;margin-top:1px}
.ok{display:flex;gap:8px;margin:27px 0 0 102px}
.ok .btn{width:73px}
.def{border-color:#3c7fb1;box-shadow:inset 0 0 0 1px #48d0f7}
.bleed{position:absolute;left:290px;bottom:1px;width:184px;height:5px;background:linear-gradient(90deg,#f7d7e0,#df95aa 30%,#e48fa4 60%,#edb4c2 75%,#db6880);filter:blur(1px)}

.marks{position:absolute;left:0;top:0;fill:none;stroke:#ed1c24;stroke-width:3}
.arrows{stroke-linejoin:bevel}
.note{position:absolute;color:#ed1c24;font-weight:bold;font-size:21px;line-height:28px;white-space:nowrap}
.n1{left:430px;top:122px}.n2{left:804px;top:635px}.n3{left:729px;top:345px}.n4{left:533px;top:471px}.n6{left:176px;top:574px}
.small{font-size:16px;font-weight:400;line-height:29px;-webkit-text-stroke:.45px #ed1c24}
.small b{-webkit-text-stroke:0}
.n5{left:544px;top:254px}.n5 b{font-size:19px;margin-right:1px}
.n7{left:1184px;top:213px}.n7 b{font-size:22px}
.n8{left:993px;top:212px}.n8 b{margin-right:1px}
.small p{height:29px}
.n7 p+p{position:relative;top:2px}
```
